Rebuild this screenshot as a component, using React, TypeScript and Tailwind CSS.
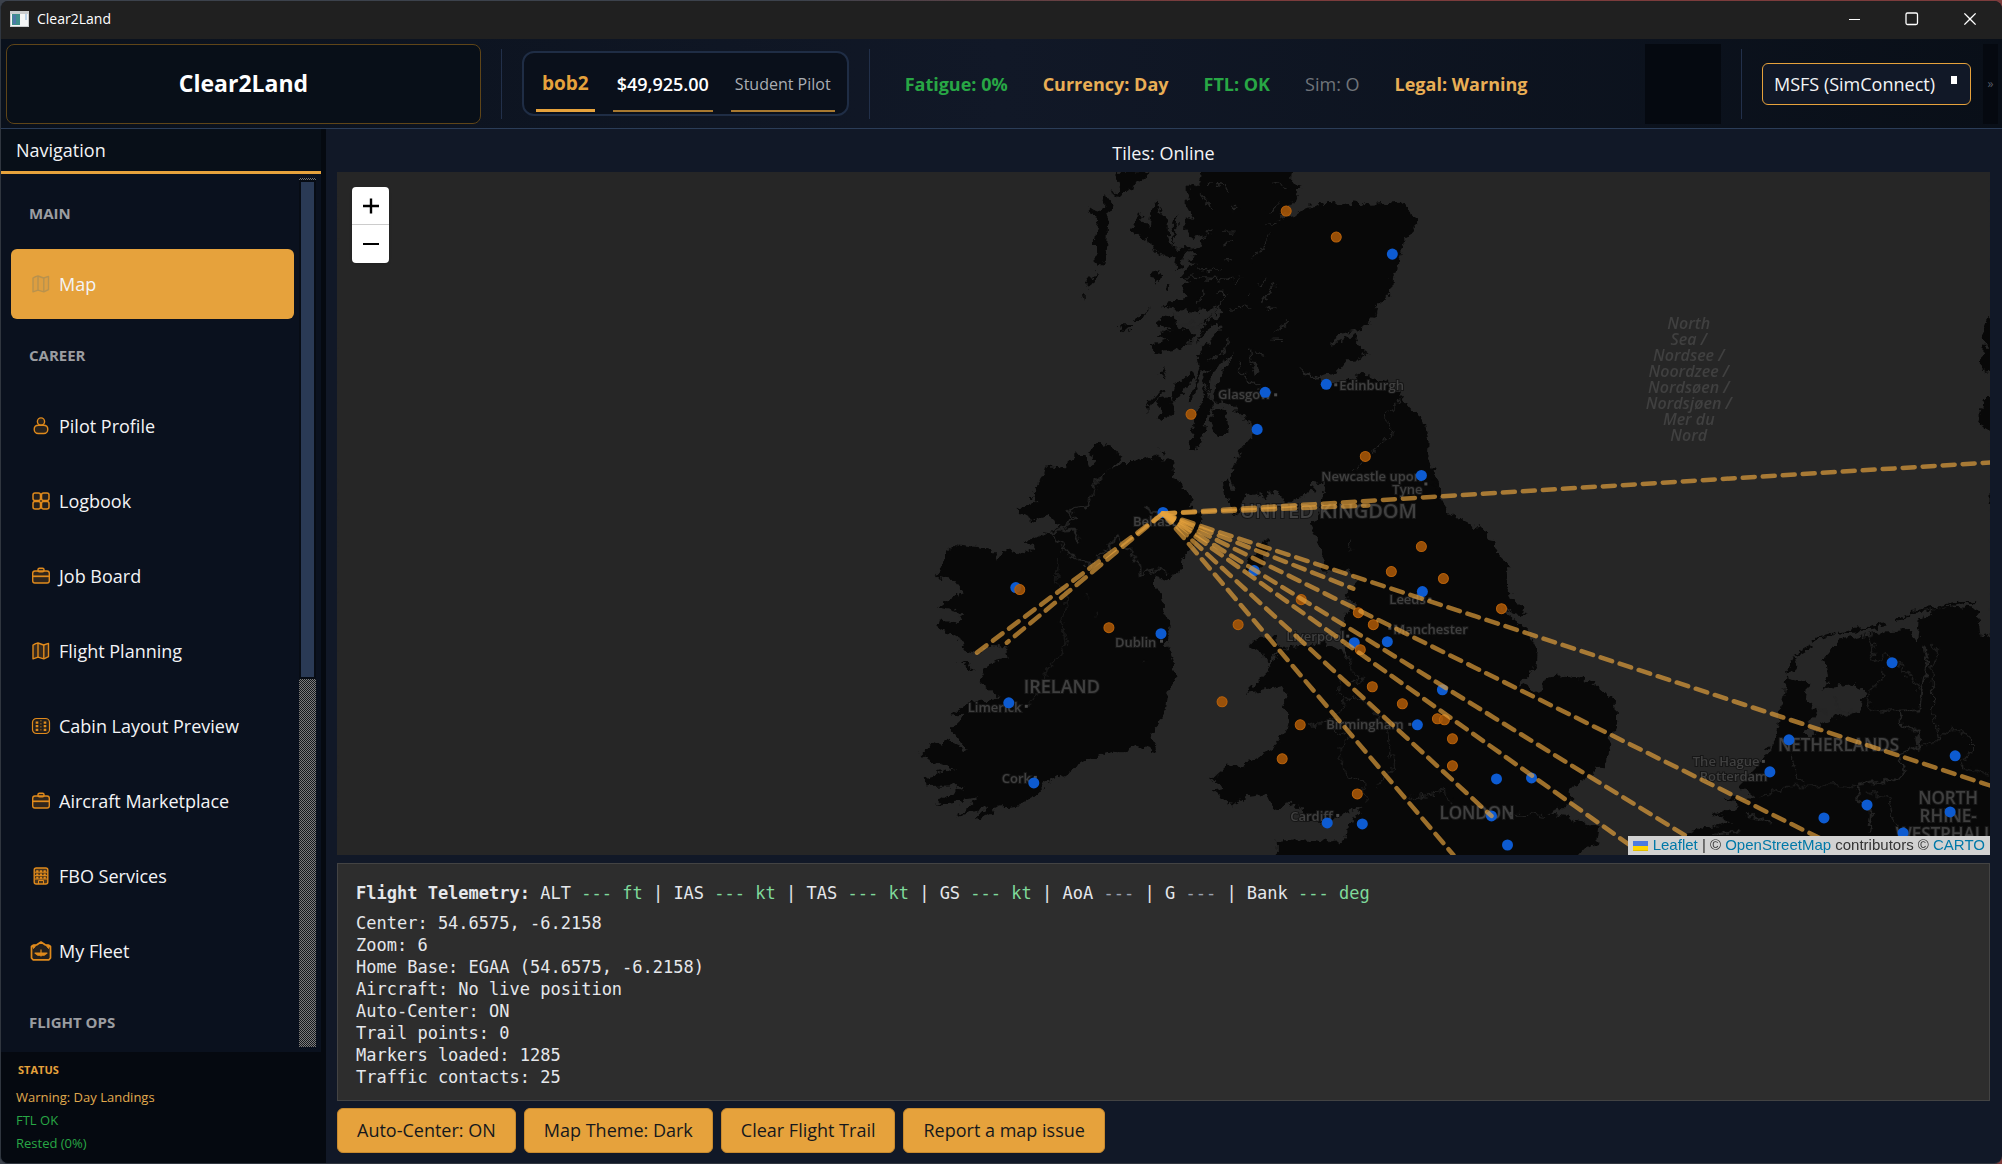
import React, {useState} from 'react';
import {VscChromeClose, VscChromeMaximize, VscChromeMinimize} from 'react-icons/vsc';

interface IMarker {
    x: number;
    y: number;
}

const majorAirports: IMarker[] = [
    {x: 1055, y: 82}, {x: 928, y: 220}, {x: 989, y: 212}, {x: 920, y: 257}, {x: 1084, y: 303},
    {x: 826, y: 340}, {x: 679, y: 415}, {x: 824, y: 461}, {x: 672, y: 530}, {x: 697, y: 610},
    {x: 917, y: 398}, {x: 1085, y: 419}, {x: 1017, y: 470}, {x: 1050, y: 469}, {x: 1105, y: 517},
    {x: 1080, y: 552}, {x: 1159, y: 606}, {x: 1194, y: 605}, {x: 1154, y: 643}, {x: 990, y: 650},
    {x: 1025, y: 651}, {x: 1170, y: 672}, {x: 1554, y: 490}, {x: 1451, y: 567}, {x: 1432, y: 599},
    {x: 1617, y: 583}, {x: 1612, y: 639}, {x: 1529, y: 632}, {x: 1486, y: 645}, {x: 1565, y: 660},
    {x: 1344, y: 669},
]

const minorAirports: IMarker[] = [
    {x: 949, y: 39}, {x: 999, y: 65}, {x: 854, y: 242}, {x: 1028, y: 284}, {x: 1084, y: 374},
    {x: 683, y: 417}, {x: 772, y: 455}, {x: 901, y: 452}, {x: 885, y: 529}, {x: 945, y: 586},
    {x: 964, y: 427}, {x: 1054, y: 399}, {x: 1106, y: 406}, {x: 1021, y: 440}, {x: 1036, y: 452},
    {x: 1164, y: 436}, {x: 1023, y: 477}, {x: 1035, y: 514}, {x: 1065, y: 531}, {x: 1100, y: 546},
    {x: 1107, y: 547}, {x: 1115, y: 566}, {x: 1115, y: 593}, {x: 1020, y: 621}, {x: 963, y: 552},
]

const home = {x: 826, y: 341}

/* 航線終點 */
const routes: IMarker[] = [
    {x: 1653, y: 290}, {x: 1031, y: 333}, {x: 1016, y: 416}, {x: 1653, y: 613}, {x: 1516, y: 682},
    {x: 1379, y: 682}, {x: 1306, y: 682}, {x: 1154, y: 643}, {x: 1116, y: 682}, {x: 640, y: 480},
    {x: 670, y: 470},
]

const cities = [
    {x: 881, y: 227, name: 'Glasgow', dotX: 938, dotY: 222},
    {x: 1002, y: 218, name: 'Edinburgh', dotX: 998, dotY: 212},
    {x: 984, y: 309, name: 'Newcastle upon', dotX: 1088, dotY: 311},
    {x: 1055, y: 322, name: 'Tyne', dotX: 0, dotY: 0},
    {x: 796, y: 353, name: 'Belfast', dotX: 0, dotY: 0},
    {x: 778, y: 474, name: 'Dublin', dotX: 824, dotY: 468},
    {x: 631, y: 539, name: 'Limerick', dotX: 689, dotY: 533},
    {x: 665, y: 610, name: 'Cork', dotX: 698, dotY: 604},
    {x: 1052, y: 431, name: 'Leeds', dotX: 1092, dotY: 426},
    {x: 1056, y: 461, name: 'Manchester', dotX: 1052, dotY: 455},
    {x: 949, y: 468, name: 'Liverpool', dotX: 1010, dotY: 463},
    {x: 989, y: 556, name: 'Birmingham', dotX: 1072, dotY: 551},
    {x: 953, y: 648, name: 'Cardiff', dotX: 1000, dotY: 642},
    {x: 1355, y: 593, name: 'The Hague', dotX: 1425, dotY: 588},
    {x: 1362, y: 608, name: 'Rotterdam', dotX: 0, dotY: 0},
    {x: 1371, y: 674, name: 'Antwerp', dotX: 1430, dotY: 668},
]

const seaName = ['North', 'Sea /', 'Nordsee /', 'Noordzee /', 'Nordsøen /', 'Nordsjøen /', 'Mer du', 'Nord']

function IconMap() {
    return (
        <svg viewBox="0 0 20 20" className="w-5 h-5" fill="currentColor" fillOpacity=".2" stroke="currentColor"
             strokeWidth="1.4" strokeLinejoin="round">
            <path d="M2 4.2 4.6 2.6 7 2l5.600 2L17.500 2.400V15.600L12.800 17.800 7 16.200 2 17.800Z"/>
            <path d="M7 2v14.200M12.800 4v13.800" fill="none"/>
        </svg>
    )
}

function IconPilot() {
    return (
        <svg viewBox="0 0 20 20" className="w-5 h-5" fill="currentColor" fillOpacity=".15" stroke="currentColor"
             strokeWidth="1.4">
            <circle cx="10" cy="5.500" r="3.600"/>
            <path d="M7.500 9.200h5c2.500 0 4.300 1.700 4.300 4s-1.600 4.300-4 4.300H7.200c-2.400 0-4-2-4-4.300s1.800-4 4.300-4Z"/>
        </svg>
    )
}

function IconGrid() {
    return (
        <svg viewBox="0 0 20 20" className="w-5 h-5" fill="currentColor" fillOpacity=".12" stroke="currentColor"
             strokeWidth="1.500">
            <rect x="2" y="2" width="7.500" height="7.500" rx="2"/>
            <rect x="10.500" y="2" width="7.500" height="7.500" rx="2"/>
            <rect x="2" y="10.500" width="7.500" height="7.500" rx="2"/>
            <rect x="10.500" y="10.500" width="7.500" height="7.500" rx="2"/>
        </svg>
    )
}

function IconCase() {
    return (
        <svg viewBox="0 0 20 20" className="w-5 h-5" fill="currentColor" fillOpacity=".18" stroke="currentColor"
             strokeWidth="1.400">
            <rect x="1.700" y="5" width="16.600" height="12" rx="2.200"/>
            <rect x="7" y="2.200" width="6" height="3.600" rx="1.400"/>
            <path d="M2 10.300h16" strokeWidth="1.700"/>
        </svg>
    )
}

function IconCabin() {
    return (
        <svg viewBox="0 0 20 20" className="w-5 h-5" fill="none" stroke="currentColor" strokeWidth="1.200">
            <rect x="1.500" y="2.500" width="17" height="15" rx="4" fill="currentColor" fillOpacity=".12"/>
            <path d="M6 5.500v10M14 5.500v10" strokeWidth="2.600" strokeDasharray="2.200 1.400"/>
            <path d="M9.900 4v12" strokeWidth="1.200" strokeDasharray="1.500 1.500" opacity=".6"/>
        </svg>
    )
}

function IconBuilding() {
    return (
        <svg viewBox="0 0 20 20" className="w-5 h-5" fill="none" stroke="currentColor" strokeWidth="1.400">
            <rect x="3.200" y="2" width="13.600" height="16" rx="2" fill="currentColor" fillOpacity=".3"/>
            <path d="M6.300 4.200v9M10 4.200v9M13.700 4.200v9" strokeWidth="2.200" strokeDasharray="2 1.300"/>
            <path d="M7.500 18v-3.500h5V18M4 6.200h12M4 9.600h12M4 13h12" strokeWidth="1"/>
        </svg>
    )
}

function IconFleet() {
    return (
        <svg viewBox="0 0 22 20" className="w-[22px] h-5 shrink-0" fill="none" stroke="currentColor" strokeWidth="1.700"
             strokeLinejoin="round">
            <path d="M1.500 5.500 4 4h2.500L11 1l4.500 3H18l2.500 1.500V17l-1.500 1.800H3L1.500 17Z" fill="currentColor"
                  fillOpacity=".12"/>
            <path d="M2 4.300h4L3.500 7.500ZM20 4.300h-4l2.500 3.200Z" fill="currentColor" strokeWidth="1"/>
            <path d="M11 8.500v7M5 12h12l-3 2.200H8Z" fill="currentColor" strokeWidth="1.200"/>
        </svg>
    )
}

const careerItems = [
    {name: 'Pilot Profile', icon: <IconPilot/>},
    {name: 'Logbook', icon: <IconGrid/>},
    {name: 'Job Board', icon: <IconCase/>},
    {name: 'Flight Planning', icon: <IconMap/>},
    {name: 'Cabin Layout Preview', icon: <IconCabin/>},
    {name: 'Aircraft Marketplace', icon: <IconCase/>},
    {name: 'FBO Services', icon: <IconBuilding/>},
    {name: 'My Fleet', icon: <IconFleet/>},
]

const telemetry = [
    {label: 'ALT', unit: 'ft'},
    {label: 'IAS', unit: 'kt'},
    {label: 'TAS', unit: 'kt'},
    {label: 'GS', unit: 'kt'},
    {label: 'AoA', unit: ''},
    {label: 'G', unit: ''},
    {label: 'Bank', unit: 'deg'},
]

function TitleBar() {
    return (
        <div className="flex items-center h-[38px] shrink-0 bg-[#202020] pl-[9px] pb-0.5 text-white">
            <svg viewBox="0 0 19 16" className="w-[19px] h-4">
                <rect width="19" height="16" fill="#c9ccce"/>
                <rect x="1" y="3" width="17" height="12" fill="#f4f6f6"/>
                <rect x="2" y="3" width="8" height="11" fill="#3f8f8c"/>
                <rect x="3" y="4" width="3" height="9" fill="#4d78a8"/>
                <rect x="15" y="3" width="2" height="6" fill="#bcd4ea"/>
            </svg>
            <div className="ml-2 text-[14px] leading-5">Clear2Land</div>
            <div className="ml-auto flex pr-[3px]">
                <button aria-label="Minimize" className="flex items-center justify-center w-[58px] h-9">
                    <VscChromeMinimize className="w-4 h-4"/></button>
                <button aria-label="Maximize" className="flex items-center justify-center w-[58px] h-9">
                    <svg viewBox="0 0 16 16" className="w-4 h-4" fill="none" stroke="currentColor" strokeWidth="1.300">
                        <rect x="2" y="2" width="11.500" height="11.500" rx="1.500"/>
                    </svg>
                </button>
                <button aria-label="Close" className="flex items-center justify-center w-[58px] h-9">
                    <VscChromeClose className="w-[18px] h-[18px]"/></button>
            </div>
        </div>
    )
}

function Header() {
    const [sim, setSim] = useState('MSFS (SimConnect)')

    return (
        <header
            className="flex items-center h-[90px] shrink-0 pl-[5px] pr-1 border-b border-[#2b3d58] bg-linear-to-r from-[#0a111c] via-[#111827] to-[#090f18]">
            <h1 className="flex items-center justify-center w-[475px] h-20 rounded-lg border border-[#5f4518] bg-[#080f18] text-[23px] font-bold text-white">
                Clear2Land
            </h1>
            <div className="w-px h-[70px] ml-5 bg-[#22304a]"/>
            <div
                className="flex items-end gap-[18px] h-[65px] ml-5 px-3 pb-0.5 rounded-xl border-2 border-[#1f2d45] bg-[#0a101b]">
                <div className="px-1.5 pb-3 border-b-[3px] border-[#e6a23c] text-[19px] leading-7 font-bold text-[#e6a23c]">bob2</div>
                <div className="px-1 pb-3 border-b-2 border-[#a87930] text-[18px] leading-7 font-semibold text-white">$49,925.00</div>
                <div className="px-1 pb-3 border-b-2 border-[#a87930] text-[16px] leading-7 text-[#a9adb3]">Student Pilot</div>
            </div>
            <div className="w-px h-[70px] ml-5 bg-[#22304a]"/>
            <div className="flex gap-[35px] ml-[35px] pt-0.5 text-[18px] font-bold whitespace-nowrap">
                <div className="text-[#28a745]">Fatigue: 0%</div>
                <div className="text-[#e9ae55]">Currency: Day</div>
                <div className="text-[#28a745]">FTL: OK</div>
                <div className="font-normal text-[#70747a]">Sim: O</div>
                <div className="text-[#e9ae55]">Legal: Warning</div>
            </div>
            <div className="w-[76px] h-20 ml-auto bg-[#050910]"/>
            <div className="w-px h-[70px] ml-5 bg-[#22304a]"/>
            <div className="relative ml-5">
                <select aria-label="Simulator" value={sim} onChange={(e) => setSim(e.target.value)}
                        className="appearance-none w-[209px] h-[42px] pl-[11px] pt-px rounded-md border border-[#e6a23c] bg-[#111827] text-[18px] text-gray-100">
                    <option>MSFS (SimConnect)</option>
                    <option>X-Plane</option>
                </select>
                <div className="absolute right-[14px] top-[13px] w-[6px] h-2 bg-white pointer-events-none"/>
            </div>
            <button aria-label="More" className="w-[15px] h-20 ml-3 bg-[#050910] text-xs text-[#555b66]">»</button>
        </header>
    )
}

function Sidebar() {
    const [active, setActive] = useState('Map')

    const navItem = (name: string, icon: React.ReactNode) => {
        const isActive = active === name
        return (
            <li key={name}>
                <button onClick={() => setActive(name)}
                        className={isActive ?
                            'flex items-center w-full h-[70px] pl-5 rounded-md bg-[#e6a23c] text-[18px] text-gray-100' :
                            'flex items-center w-full h-[70px] pl-5 rounded-md text-[18px] text-gray-100'}>
                    <span className={isActive ? 'flex justify-center w-5 text-[#b8924e]' : 'flex justify-center w-5 text-[#e08a1c]'}>
                        {icon}
                    </span>
                    <span className="ml-2">{name}</span>
                </button>
            </li>
        )
    }

    return (
        <aside className="flex flex-col w-[325px] shrink-0 bg-[#050910]">
            <div className="flex flex-col flex-1 min-h-0 w-80 bg-[#0a111e]">
                <div className="h-[45px] shrink-0 pl-[15px] pt-1.5 border-b-[3px] border-[#e6a23c] bg-[#080f18] text-[18px] leading-[30px] text-gray-100">
                    Navigation
                </div>
                <div className="flex flex-1 min-h-0">
                    <nav className="flex-1 overflow-hidden pl-2.5 pt-[3px]">
                        <h2 className="flex items-center h-[72px] pl-[18px] text-[15px] font-bold text-[#9b9da1]">MAIN</h2>
                        <ul>{navItem('Map', <IconMap/>)}</ul>
                        <h2 className="flex items-center h-[72px] pl-[18px] text-[15px] font-bold text-[#9b9da1]">CAREER</h2>
                        <ul className="flex flex-col gap-[5px]">
                            {careerItems.map((item) => navItem(item.name, item.icon))}
                        </ul>
                        <h2 className="flex items-center h-[72px] pl-[18px] text-[15px] font-bold text-[#9b9da1]">FLIGHT OPS</h2>
                    </nav>
                    <div className="flex flex-col w-[17px] mx-[5px] pt-1 pb-[5px]">
                        <div className="h-0.5 bg-[repeating-conic-gradient(#6f7276_0_25%,#0a0e14_0_50%)] bg-size-[2px_2px]"/>
                        <div className="h-[499px] shrink-0 border-2 border-[#070c14] bg-[#2a3a55]"/>
                        <div className="flex-1 bg-[repeating-conic-gradient(#7c7c7c_0_25%,#15181c_0_50%)] bg-size-[2px_2px]"/>
                    </div>
                </div>
            </div>
            <div className="h-[111px] shrink-0 pl-[15px] pt-[9px] text-[13px] leading-[23px]">
                <div className="pl-0.5 mb-[7px] text-[11px] leading-[18px] font-bold text-[#e6a23c]">STATUS</div>
                <div className="text-[#e0a94e]">Warning: Day Landings</div>
                <div className="text-[#28a745]">FTL OK</div>
                <div className="text-[#28a745]">Rested (0%)</div>
            </div>
        </aside>
    )
}

/* 地圖 */
function MapCanvas() {
    return (
        <svg viewBox="0 0 1653 682" preserveAspectRatio="xMidYMid slice" className="absolute inset-0 w-full h-full">
            <defs>
                <filter id="coast" x="0" y="0" width="100%" height="100%" colorInterpolationFilters="sRGB">
                    <feTurbulence type="fractalNoise" baseFrequency=".13" numOctaves="3" seed="4"/>
                    <feDisplacementMap in="SourceGraphic" scale="11" xChannelSelector="R" yChannelSelector="G"/>
                </filter>
            </defs>
            <rect width="1653" height="682" fill="#262626"/>
            <g fill="#080808" filter="url(#coast)">
                <rect width="1653" height="682" fill="#262626"/>
                {/* Scotland */}
                <g transform="translate(703 -2) scale(.33333)">
                    <path d="M485 -20 760 -20 752 35 785 48 765 80 748 105 712 148 770 132 800 110 830 108 860 90 905 107 940 97 1000 104 1080 98 1108 110 1127 152 1118 180 1085 225 1075 285 1055 320 1052 370 1010 410 1005 440 960 480 905 490 868 518 900 512 950 490 945 512 988 545 950 568 920 570 890 605 845 622 800 610 775 594 795 616 840 630 870 640 900 632 940 625 965 608 1030 635 1075 665 1085 690 1110 720 1150 750 1162 800 1160 850 1180 900 1195 930 1200 1200 850 1200 850 1145 813 1075 845 1005 850 965 905 945 822 932 818 962 780 975 740 1000 712 972 680 955 685 985 650 970 612 978 590 1035 555 980 548 930 562 922 575 955 585 950 570 920 580 890 605 830 640 790 634 760 600 730 580 712 560 700 520 690 528 640 545 610 588 550 540 580 508 625 505 680 525 700 500 740 492 805 488 830 445 842 442 812 462 800 455 760 480 700 500 660 490 630 505 590 478 620 460 680 440 700 478 600 470 560 500 520 545 470 540 450 500 480 470 520 490 470 545 430 540 405 500 460 470 470 530 415 460 425 370 412 385 395 440 385 425 350 450 335 425 320 450 290 475 285 440 270 470 250 440 240 480 230 500 195 450 205 432 180 435 140 462 150 440 110 440 45 470 52 480 25Z"/>
                    <path d="M350 95 362 130 382 150 385 210 400 232 455 235 430 262 420 300 402 305 410 265 350 252 330 220 322 195 312 212 275 180 285 155 300 132 330 172 335 110Z"/>
                    <path d="M400 150 412 135 408 190 395 230Z"/>
                    <path d="M385 430 352 455 360 475 398 475 355 495 385 508 332 525 348 545 400 540 440 525 468 495 440 478 412 470 402 435Z"/>
                    <path d="M385 655 355 680 322 722 330 690 350 668ZM345 690 388 680 402 722 358 755 350 745 370 720Z"/>
                    <path d="M455 600 465 620 410 690 392 690 402 650ZM380 590 368 625 362 610Z"/>
                    <path d="M518 718 545 713 566 765 560 797 530 797 510 745Z"/>
                    <path d="M225 6 300 4 330 15 290 42 262 62 240 84 218 72 240 40Z"/>
                    <path d="M146 115 185 128 195 75 218 110 205 155 202 225 196 290 168 286 165 210 175 150 155 135Z"/>
                    <path d="M143 335 168 308 162 342 143 350ZM124 372l8 0 -2 14zM330 415 300 452 278 452ZM240 462 285 462 250 492Z"/>
                    <path d="M330 310 355 303 367 325 350 337ZM375 340 388 348 378 358ZM358 838 378 840 372 850Z"/>
                </g>
                {/* Ireland */}
                <g transform="translate(563 268) scale(.33333)">
                    <path d="M590 5 630 20 668 50 640 85 612 100 655 78 665 68 700 68 770 45 820 70 822 100 850 145 878 170 872 202 900 218 912 250 880 320 850 350 842 390 805 418 765 405 765 440 785 458 790 510 812 552 800 600 820 660 826 710 800 770 790 830 750 880 772 915 765 932 710 912 665 940 640 932 560 960 500 1000 430 1025 432 1050 350 1095 300 1100 225 1138 260 1100 170 1130 235 1075 105 1095 195 1035 85 1038 72 1010 160 985 60 945 90 915 145 900 205 930 155 865 200 822 152 824 215 785 300 770 235 720 270 665 330 650 325 622 270 612 230 640 185 630 195 605 110 555 120 540 172 545 200 520 115 500 140 480 192 455 165 420 105 408 125 380 140 335 172 312 275 325 292 365 312 328 372 338 405 318 372 305 420 280 450 285 482 250 440 225 400 238 350 210 410 185 395 160 430 110 440 75 490 78 530 42 560 45 568 90 595 62 565 42Z"/>
                    <path d="M175 658 215 672 230 686 190 672Z"/>
                </g>
                {/* England, Wales and the Isle of Man */}
                <g transform="translate(863 308) scale(.33333)">
                    <path d="M375 0 700 0 715 50 750 100 850 150 880 190 890 222 938 258 915 280 925 330 975 402 940 397 885 372 940 415 975 440 1012 510 1008 555 955 605 1015 640 1035 592 1100 585 1170 600 1210 630 1247 670 1250 730 1232 765 1222 840 1160 890 1110 922 1112 960 1085 985 1040 1000 1100 1008 1130 1025 1197 1035 1190 1085 1150 1105 1100 1160 230 1160 230 1080 290 1075 350 1078 380 1084 435 1075 440 1040 520 930 490 975 430 1000 380 1025 320 1010 280 965 220 985 200 940 130 950 110 972 80 965 40 935 80 925 36 895 80 855 130 855 220 800 250 760 265 700 247 680 265 650 245 615 180 630 138 637 205 570 218 540 240 505 290 500 375 485 420 510 450 535 430 490 475 510 425 480 428 410 462 370 430 340 470 300 440 270 435 240 400 272 375 240 362 200 330 145 360 90 370 40Z"/>
                    <path d="M170 468 225 468 238 505 208 542 165 512 150 492Z"/>
                    <path d="M205 172 205 205 180 262 145 278 142 245 172 198Z"/>
                </g>
                {/* Low Countries and Jutland */}
                <g transform="translate(1103 128) scale(.3584)">
                    <path d="M1570 920 1505 935 1495 860 1440 855 1380 862 1338 890 1330 960 1305 922 1200 928 1110 950 1070 1000 1078 1060 1065 1085 1140 1070 1185 1090 1170 1145 1120 1155 1060 1180 1030 1225 1015 1205 1050 1140 1018 1110 1025 1068 965 1055 950 1130 938 1210 880 1300 830 1350 880 1390 790 1385 840 1410 760 1430 810 1455 740 1470 655 1500 630 1600 1570 1600Z"/>
                    <path d="M985 990 992 1015 965 1048 962 1032Z"/>
                    <path d="M1525 50 1560 50 1560 130 1530 130 1508 100ZM1508 130 1560 130 1560 190 1505 200ZM1515 275 1560 275 1560 360 1540 368 1500 345ZM1530 535 1560 535 1560 572 1530 572Z"/>
                    <g fill="none" stroke="#080808" strokeWidth="7">
                        <path d="M1035 948 1095 930M1110 926 1190 915 1245 903M1275 888 1305 876M1310 870 1400 855 1470 838 1490 845M990 988 1030 965"/>
                    </g>
                </g>
            </g>
            {/* lochs, rivers and borders */}
            <g fill="none" stroke="#262626" strokeWidth="1" strokeLinejoin="round" filter="url(#coast)">
                <g transform="translate(703 -2) scale(.33333)" strokeWidth="4">
                    <path d="M690 190 665 235 635 272M605 315 582 342M560 370 530 415M640 410 565 414M505 40 545 45 565 60M480 70 520 120M500 195 520 180M570 115h22M550 186h28M550 218l32-4M550 272h25M470 300 545 295M440 320 580 328M500 360 465 400M525 368 555 370M675 328 655 345M702 342 670 398M625 365l-4 20M675 415 715 413M745 450 720 472 697 482M700 510h28M570 505 540 550 505 575M628 535 632 570 645 610M645 545l25 8M600 575 605 610 640 640 665 650M690 38 745 50M720 95 680 135M715 160 680 162M455 455 420 460"/>
                    <path d="M400 430 415 462 465 480 530 415" strokeWidth="8"/>
                    <path d="M638 575 658 605 645 615Z" fill="#262626"/>
                    <path d="M1080 690 1035 740 1058 790 990 845M970 875 935 910" strokeWidth="3"/>
                </g>
                <g transform="translate(563 268) scale(.33333)" strokeWidth="6">
                    <path d="M610 100 590 120 580 160 560 195 500 210 530 235 455 280 490 320 510 345 570 370 620 330 650 290 680 320 715 360 720 400 780 385 805 400"/>
                    <path d="M480 270 520 265 540 300" strokeWidth="8"/>
                    <path d="M740 195 750 225 785 220" strokeWidth="10"/>
                    <path d="M475 350 470 420 505 470 485 540 500 600 485 640 435 690 430 725M410 760 385 795M560 455v12M590 515v15M732 660l8 5" strokeWidth="3"/>
                </g>
                <g transform="translate(863 308) scale(.33333)" strokeWidth="3">
                    <path d="M425 510 450 545 460 580 485 595 470 608 415 595 412 635 440 655 410 700 400 750 450 765 420 800 420 850 450 885 490 900 495 965M440 650 490 660 530 710 560 760 578 860 530 920M320 730 345 738 370 715 400 718M620 955 660 945 720 935 730 920 740 960 760 970M930 995 980 1000 1040 1010M448 180 450 210"/>
                </g>
                <g transform="translate(1103 128) scale(.3584)" strokeWidth="3">
                    <path d="M1370 960 1390 980 1370 1020 1372 1150 1390 1225 1330 1245M1195 930 1210 980 1200 1010 1240 990 1280 1015 1335 1085M1230 1030 1230 1060 1195 1090 1190 1130 1220 1145 1275 1140M980 1265 990 1320 1010 1350M1010 1355 960 1355 890 1390M1010 1355 1100 1350 1165 1360M1185 1370 1250 1390 1260 1440 1285 1490M1385 1225 1425 1190 1480 1220 1480 1255 1450 1300 1530 1320"/>
                    <path d="M1345 960 1358 1010 1340 1085 1335 1140 1280 1145 1285 1185 1330 1200 1335 1240 1280 1270 1295 1310 1270 1335 1165 1350 1165 1390 1200 1430 1195 1480" strokeWidth="6"/>
                    <path d="M1040 1130 1075 1150M1100 1110 1105 1140 1130 1155 1160 1140M850 1430 920 1460M760 1490 830 1480" strokeWidth="6"/>
                </g>
            </g>
            <g fill="#404040" stroke="#161616" strokeWidth="2" paintOrder="stroke" fontSize="13" fontWeight="600">
                {cities.map((city) => (
                    <g key={city.name}>
                        <text x={city.x} y={city.y}>{city.name}</text>
                        {city.dotX > 0 && <rect x={city.dotX - 1} y={city.dotY - 1} width="3" height="3" stroke="none" fill="#4a4a4a"/>}
                    </g>
                ))}
                <text x="903" y="345" fontSize="20">UNITED KINGDOM</text>
                <text x="687" y="520" fontSize="18">IRELAND</text>
                <text x="1102" y="646" fontSize="17">LONDON</text>
                <rect x="1172" y="639" width="3" height="3" stroke="none"/>
                <text x="1440" y="578" fontSize="17">NETHERLANDS</text>
                <g fontSize="17" textAnchor="middle">
                    <text x="1610" y="631">NORTH</text>
                    <text x="1610" y="649">RHINE-</text>
                    <text x="1610" y="667">WESTPHALIA</text>
                </g>
                <g fontSize="16" fontStyle="italic" textAnchor="middle" stroke="none">
                    {seaName.map((line, i) => <text key={i} x="1351" y={157 + i * 16}>{line}</text>)}
                </g>
            </g>
            <g fill="#0d5bd1">
                {majorAirports.map((item, i) => <circle key={i} cx={item.x} cy={item.y} r="5.500"/>)}
            </g>
            <g fill="#a65708" stroke="#b8610a" fillOpacity=".9">
                {minorAirports.map((item, i) => <circle key={i} cx={item.x} cy={item.y} r="5"/>)}
            </g>
            <g stroke="#e6a23c" strokeOpacity=".68" strokeWidth="4.500" strokeLinecap="round" strokeDasharray="12 8">
                {routes.map((item, i) => <line key={i} x1={home.x} y1={home.y} x2={item.x} y2={item.y}/>)}
            </g>
        </svg>
    )
}

function App() {
    const [autoCenter, setAutoCenter] = useState(true)
    const [dark, setDark] = useState(true)
    const [zoom, setZoom] = useState(6)

    const details = [
        'Center: 54.6575, -6.2158',
        'Zoom: ' + zoom,
        'Home Base: EGAA (54.6575, -6.2158)',
        'Aircraft: No live position',
        'Auto-Center: ' + (autoCenter ? 'ON' : 'OFF'),
        'Trail points: 0',
        'Markers loaded: 1285',
        'Traffic contacts: 25',
    ]

    const btnClass = 'h-[45px] px-[19px] rounded-md border border-[#c98a2e] bg-[#e6a23c] text-[18px] text-[#15181d]'

    return (
        <div className="h-screen bg-linear-to-r from-[#3c424c] from-40% via-[#7c3c3c] via-60% to-[#7c3c3c] pt-px font-['Open_Sans','Noto_Sans',sans-serif]">
            <div className="flex flex-col h-full overflow-hidden rounded-lg border-l border-b border-[#30363f] bg-[#111827]">
                <TitleBar/>
                <Header/>
                <div className="flex flex-1 min-h-0">
                    <Sidebar/>
                    <main className="flex flex-col flex-1 min-w-0 pl-[11px] pr-3 pb-[10px]">
                        <div className="h-[43px] shrink-0 pt-1 text-center text-[18px] leading-10 text-gray-100">Tiles: Online</div>
                        <div className="relative flex-1 min-h-0 overflow-hidden bg-[#262626]">
                            <MapCanvas/>
                            <div className="absolute left-[15px] top-[15px] flex flex-col w-[37px] rounded-sm bg-white text-black shadow">
                                <button aria-label="Zoom in" onClick={() => setZoom(zoom + 1)}
                                        className="flex items-center justify-center h-[38px] border-b border-[#ccc]">
                                    <svg viewBox="0 0 16 16" className="w-4 h-4" stroke="currentColor" strokeWidth="2.400"><path d="M8 .5v15M0 8h16"/></svg>
                                </button>
                                <button aria-label="Zoom out" onClick={() => setZoom(zoom - 1)}
                                        className="flex items-center justify-center h-[38px]">
                                    <svg viewBox="0 0 16 16" className="w-4 h-4" stroke="currentColor" strokeWidth="2"><path d="M0 8h16"/></svg>
                                </button>
                            </div>
                            <div
                                className="absolute right-0 bottom-0 flex items-center h-[19px] px-[5px] bg-[#d2d2d2] font-['Liberation_Sans',sans-serif] text-[15px] text-[#333] whitespace-pre">
                                <svg viewBox="0 0 15 10" className="w-[15px] h-2.5 mr-[5px]">
                                    <path fill="#4c7be1" d="M0 0h15v5H0z"/>
                                    <path fill="#ffd500" d="M0 5h15v4H0z"/>
                                    <path fill="#e0bc00" d="M0 9h15v1H0z"/>
                                </svg>
                                <a href="#leaflet" className="text-[#0078a8]">Leaflet</a> | © <a
                                href="#osm" className="text-[#0078a8]">OpenStreetMap</a> contributors © <a
                                href="#carto" className="text-[#0078a8]">CARTO</a>
                            </div>
                        </div>
                        <section
                            className="h-[238px] shrink-0 mt-2 pl-[18px] pt-3.5 border border-[#434343] bg-[#2d2d2d] font-['DejaVu_Sans_Mono','Liberation_Mono',monospace] text-[17px] leading-[22px] text-gray-200">
                            <div className="h-[34px] leading-[30px] whitespace-pre">
                                <b>Flight Telemetry:</b>{' '}
                                {telemetry.map((item, i) => (
                                    <span key={item.label}>
                                        {i > 0 && ' | '}{item.label}{' '}
                                        <span className={item.unit ? 'text-[#7fd99a]' : 'text-gray-400'}>---{item.unit && ' ' + item.unit}</span>
                                    </span>
                                ))}
                            </div>
                            {details.map((line) => <div key={line}>{line}</div>)}
                        </section>
                        <div className="flex gap-2 mt-[7px]">
                            <button className={btnClass} onClick={() => setAutoCenter(!autoCenter)}>Auto-Center: {autoCenter ? 'ON' : 'OFF'}</button>
                            <button className={btnClass} onClick={() => setDark(!dark)}>Map Theme: {dark ? 'Dark' : 'Light'}</button>
                            <button className={btnClass}>Clear Flight Trail</button>
                            <button className={btnClass}>Report a map issue</button>
                        </div>
                    </main>
                </div>
            </div>
        </div>
    );
}

export default App;
